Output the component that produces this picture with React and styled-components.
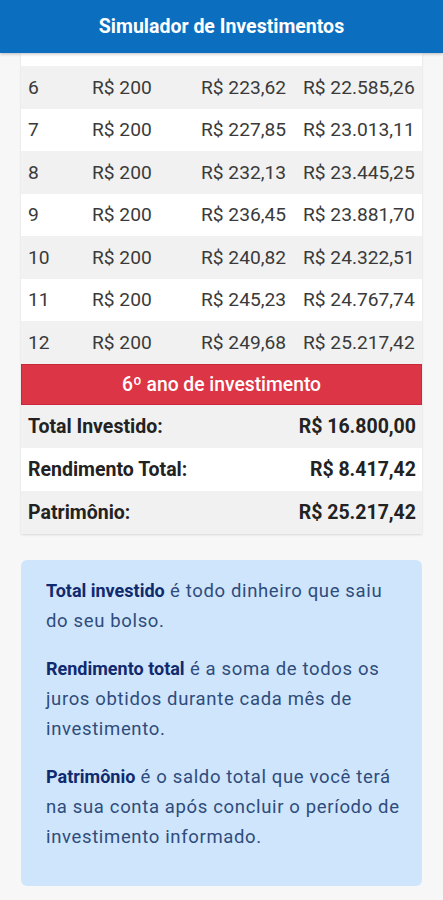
import React from "react";
import styled, { createGlobalStyle } from "styled-components";

const GlobalStyle = createGlobalStyle`
  html, body {
    margin: 0;
    padding: 0;
    background: #f7f7f7;
    font-family: Roboto, "Liberation Sans", sans-serif;
  }
`;

const StyledPage = styled.div`
  width: 443px;
  height: 900px;
  overflow: hidden;
  display: flex;
  flex-direction: column;
  background: #f7f7f7;
`;

const StyledHeader = styled.header`
  height: 53px;
  flex-shrink: 0;
  display: flex;
  align-items: center;
  justify-content: center;
  background: #0b6ebf;
  box-shadow: 0 1px 3px rgba(0, 0, 0, 0.25);
  color: #fff;
  font-size: 19.5px;
  font-weight: 700;
  position: relative;
  z-index: 2;
`;

const StyledContent = styled.main`
  padding: 0 21px;
  display: flex;
  flex-direction: column;
  gap: 26px;
`;

const StyledCard = styled.section`
  background: #fff;
  box-shadow: 0 1px 2px rgba(0, 0, 0, 0.12);
  padding-top: 13px;
`;

const StyledRow = styled.div`
  display: grid;
  grid-template-columns: 64px 109px 102px 1fr;
  height: 42.5px;
  align-items: center;
  background: ${({ striped }) => (striped ? "#f1f1f1" : "#fff")};
  color: #3a3a3a;
  font-size: 19.2px;
  & span {
    padding: 0 6px 0 7px;
    white-space: nowrap;
  }
`;

const StyledYear = styled.div`
  height: 39px;
  display: flex;
  align-items: center;
  justify-content: center;
  background: #dc3545;
  border: 1px solid #c9283a;
  color: #fff;
  font-size: 19.3px;
  font-weight: 500;
`;

const StyledTotal = styled.div`
  height: 43px;
  display: flex;
  align-items: center;
  justify-content: space-between;
  padding: 0 6px 0 7px;
  background: ${({ striped }) => (striped ? "#f1f1f1" : "#fff")};
  color: #222;
  font-size: 19.5px;
  font-weight: 700;
`;

const StyledInfo = styled.aside`
  background: #cfe5fb;
  border-radius: 6px;
  padding: 16px 18px 16px 25px;
  color: #2e4c7c;
  font-size: 18.5px;
  letter-spacing: 0.65px;
  line-height: 30px;
  & p {
    margin: 0 0 18px;
  }
  & strong {
    color: #0f2a6e;
    font-weight: 700;
    font-size: 18px;
    letter-spacing: 0;
  }
`;

const rows = [
  ["6", "R$ 200", "R$ 223,62", "R$ 22.585,26"],
  ["7", "R$ 200", "R$ 227,85", "R$ 23.013,11"],
  ["8", "R$ 200", "R$ 232,13", "R$ 23.445,25"],
  ["9", "R$ 200", "R$ 236,45", "R$ 23.881,70"],
  ["10", "R$ 200", "R$ 240,82", "R$ 24.322,51"],
  ["11", "R$ 200", "R$ 245,23", "R$ 24.767,74"],
  ["12", "R$ 200", "R$ 249,68", "R$ 25.217,42"],
];

const totals = [
  ["Total Investido:", "R$ 16.800,00"],
  ["Rendimento Total:", "R$ 8.417,42"],
  ["Patrimônio:", "R$ 25.217,42"],
];

const App = () => {
  return (
    <>
      <GlobalStyle />
      <StyledPage>
        <StyledHeader>Simulador de Investimentos</StyledHeader>
        <StyledContent>
          <StyledCard>
            {rows.map((row, i) => (
              <StyledRow key={row[0]} striped={i % 2 === 0}>
                {row.map((cell, j) => (
                  <span key={j}>{cell}</span>
                ))}
              </StyledRow>
            ))}
            <StyledYear>6º ano de investimento</StyledYear>
            {totals.map(([label, value], i) => (
              <StyledTotal key={label} striped={i % 2 === 0}>
                <span>{label}</span>
                <span>{value}</span>
              </StyledTotal>
            ))}
          </StyledCard>
          <StyledInfo>
            <p>
              <strong>Total investido</strong> é todo dinheiro que saiu do seu
              bolso.
            </p>
            <p>
              <strong>Rendimento total</strong> é a soma de todos os juros
              obtidos durante cada mês de investimento.
            </p>
            <p>
              <strong>Patrimônio</strong> é o saldo total que você terá na sua
              conta após concluir o período de investimento informado.
            </p>
          </StyledInfo>
        </StyledContent>
      </StyledPage>
    </>
  );
};

export default App;
